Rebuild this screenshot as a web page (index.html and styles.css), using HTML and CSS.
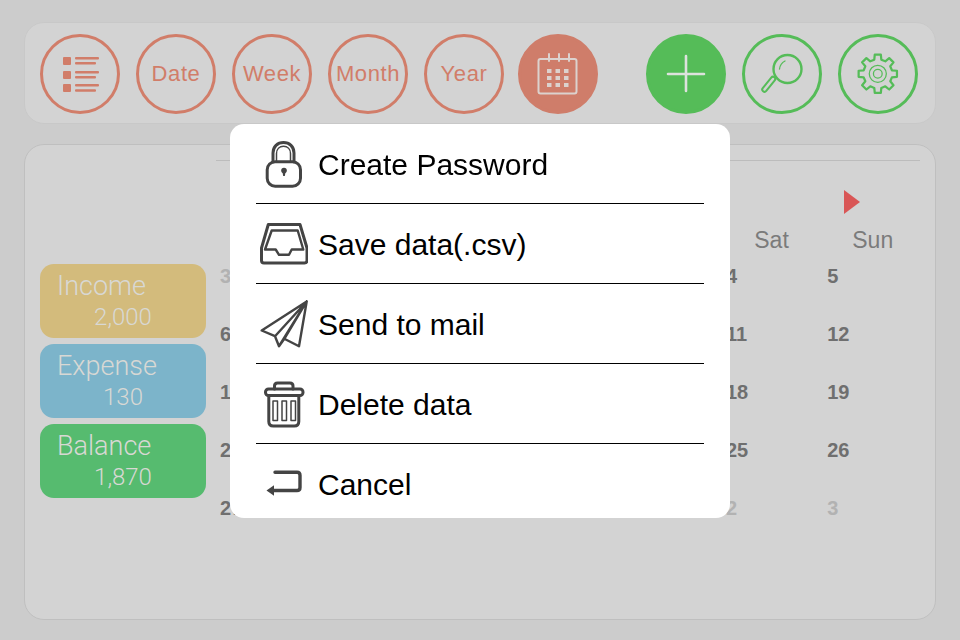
FILE: index.html
```html
<!DOCTYPE html>
<html lang="en">
<head>
<meta charset="utf-8">
<title>Household account</title>
<link rel="stylesheet" href="styles.css">
</head>
<body>
<div class="app">
  <header class="toolbar">
    <div class="btn-group">
      <button class="round red"><svg class="ico" viewBox="3 3 74 74"><g class="fill-red"><rect x="23" y="23" width="8" height="8" rx="1"/><rect x="23" y="37" width="8" height="8" rx="1"/><rect x="23" y="50" width="8" height="8" rx="1"/><rect x="35" y="23" width="24" height="2.600" rx="1"/><rect x="35" y="28" width="21" height="2.400" rx="1"/><rect x="35" y="37" width="24" height="2.400" rx="1"/><rect x="35" y="42" width="21" height="2.400" rx="1"/><rect x="35" y="50" width="24" height="2.600" rx="1"/><rect x="35" y="55.300" width="21" height="2.400" rx="1"/></g></svg></button>
      <button class="round red">Date</button>
      <button class="round red">Week</button>
      <button class="round red">Month</button>
      <button class="round red">Year</button>
      <button class="round red solid"><svg class="ico" viewBox="3 3 74 74"><g class="stroke-pale"><rect x="20.500" y="25" width="38" height="34.500" rx="2"/><path d="M31 20v7M41 20v7M51 20v7"/></g><g class="fill-pale"><rect x="29" y="35" width="4.500" height="4"/><rect x="37.500" y="35" width="4.500" height="4"/><rect x="46" y="35" width="4.500" height="4"/><rect x="29" y="42" width="4.500" height="4"/><rect x="37.500" y="42" width="4.500" height="4"/><rect x="46" y="42" width="4.500" height="4"/><rect x="29" y="49" width="4.500" height="4"/><rect x="37.500" y="49" width="4.500" height="4"/><rect x="46" y="49" width="4.500" height="4"/></g></svg></button>
    </div>
    <div class="btn-group">
      <button class="round green solid"><svg class="ico" viewBox="3 3 74 74"><path class="plus" d="M40 22v35M22 40h36"/></svg></button>
      <button class="round green"><svg class="ico" viewBox="3 3 74 74"><path class="handle-out" d="M31 45 22.500 55.500"/><path class="handle-in" d="M31 45 22.500 55.500"/><g class="stroke-green"><circle class="lens" cx="45.500" cy="35" r="14"/><path class="thin" d="M37.500 35c.5-4 2.500-6.500 5.500-8"/></g></svg></button>
      <button class="round green"><svg class="ico" viewBox="3 3 74 74"><g class="stroke-green gear" transform="translate(39.800 39.800) scale(.97)"><polygon points="-3.630,-14.550 -3.130,-19.750 3.130,-19.750 3.630,-14.550 7.730,-12.860 11.760,-16.180 16.180,-11.760 12.860,-7.730 14.550,-3.630 19.750,-3.130 19.750,3.130 14.550,3.630 12.860,7.730 16.180,11.760 11.760,16.180 7.730,12.860 3.630,14.550 3.130,19.750 -3.130,19.750 -3.630,14.550 -7.730,12.860 -11.760,16.180 -16.180,11.760 -12.860,7.730 -14.550,3.630 -19.750,3.130 -19.750,-3.130 -14.550,-3.630 -12.860,-7.730 -16.180,-11.760 -11.760,-16.180 -7.730,-12.860"/><circle class="thin" r="8.800"/><circle class="thin" r="4.500"/></g></svg></button>
    </div>
  </header>

  <main class="panel">
    <aside class="legend">
      <div class="tile income"><div class="tile-label">Income</div><div class="tile-value">2,000</div></div>
      <div class="tile expense"><div class="tile-label">Expense</div><div class="tile-value">130</div></div>
      <div class="tile balance"><div class="tile-label">Balance</div><div class="tile-value">1,870</div></div>
    </aside>
    <section class="calendar">
      <div class="cal-nav"><span class="next"></span></div>
      <div class="weekdays">
        <span></span><span></span><span></span><span></span><span></span><span>Sat</span><span>Sun</span>
      </div>
      <div class="days">
        <span class="off">30</span><span></span><span></span><span></span><span></span><span>4</span><span>5</span>
        <span>6</span><span></span><span></span><span></span><span></span><span>11</span><span>12</span>
        <span>13</span><span></span><span></span><span></span><span></span><span>18</span><span>19</span>
        <span>20</span><span></span><span></span><span></span><span></span><span>25</span><span>26</span>
        <span>27</span><span></span><span></span><span></span><span></span><span class="off">2</span><span class="off">3</span>
      </div>
    </section>
  </main>

  <nav class="menu">
    <div class="menu-row">
      <svg class="menu-ico" viewBox="0 0 48 48"><rect class="ink" x="7.200" y="21.700" width="33.300" height="24.500" rx="8"/><path class="ink" d="M13 21.700V13C13 6.500 17.500 2.500 23.500 2.500S34 6.500 34 13v8.700"/><path class="ink-thin" d="M16.500 21.700V13.500C16.500 9 19.500 6.200 23.500 6.200s7 2.800 7 7.300v8.200"/><circle class="ink-fill" cx="24" cy="30.500" r="2.800"/><path class="ink-fill" d="M22.200 31h3.600L24.800 36h-1.600z"/></svg>
      <span>Create Password</span>
    </div>
    <div class="menu-row">
      <svg class="menu-ico" viewBox="0 0 48 48"><path class="ink" d="M8.300 4.500H40L47 28v12.500q0 2.500-2.500 2.500H4q-2.500 0-2.500-2.500V28z"/><path class="ink-mid" d="M11.700 10.500h26L43.300 29.500H31.700L29 34.800H19L15.700 29.500H5z"/></svg>
      <span>Save data(.csv)</span>
    </div>
    <div class="menu-row">
      <svg class="menu-ico" viewBox="0 0 48 48"><path class="ink-mid" d="M46.700 1.500 1.700 30.500 15 36.200 19 46.200 24.300 38.800 39 46.200zM46.700 1.500 15 36.200M46.700 1.500 19 46.200M46.700 1.500 24.300 38.800"/></svg>
      <span>Send to mail</span>
    </div>
    <div class="menu-row">
      <svg class="menu-ico" viewBox="0 0 48 48"><rect class="ink" x="5.500" y="9" width="37.500" height="6.500" rx="3"/><path class="ink" d="M14.500 9V6q0-3 3-3h12.500q3 0 3 3v3M8.800 15.500V41.500q0 4.500 4.500 4.500h21q4.500 0 4.500-4.500V15.500"/><g class="ink-thin"><rect x="13" y="21" width="4.500" height="19.500"/><rect x="22" y="21" width="4.500" height="19.500"/><rect x="31" y="21" width="4.500" height="19.500"/></g></svg>
      <span>Delete data</span>
    </div>
    <div class="menu-row">
      <svg class="menu-ico" viewBox="0 0 48 48"><path class="ink-bold" d="M15 12.200H37q3 0 3 3V27.500q0 3-3 3H12"/><path class="ink-fill" d="M6.500 30.500 14 25.200V35.800z"/></svg>
      <span>Cancel</span>
    </div>
  </nav>
</div>
</body>
</html>
```
FILE: styles.css
```css
* { box-sizing: border-box; }
html, body { margin: 0; height: 100%; }
body { background: #ccc; font-family: "Liberation Sans", Arial, sans-serif; overflow: hidden; }

.app {
  position: relative;
  width: 960px;
  height: 640px;
  padding: 22px 24px 20px;
  display: flex;
  flex-direction: column;
  gap: 20px;
  will-change: opacity;
}

.toolbar {
  height: 102px;
  background: #d3d3d3;
  border: 1px solid #c8c8c8;
  border-radius: 20px;
  padding: 11px 17px 0 15px;
  display: flex;
  justify-content: space-between;
}
.btn-group { display: flex; gap: 16px; }
.btn-group:first-child .solid { margin-left: -2px; }

.round {
  flex: none;
  width: 80px;
  height: 80px;
  padding: 0;
  border-radius: 50%;
  border: 3px solid;
  background: transparent;
  font: 22px "Liberation Sans", Arial, sans-serif;
  letter-spacing: .6px;
  display: flex;
  align-items: center;
  justify-content: center;
  white-space: nowrap;
}
.round.red { color: #d17d69; border-color: #d17d69; }
.round.green { border-color: #55bc58; }
.round.red.solid { background: #cf7d6a; border-color: #cf7d6a; }
.round.green.solid { background: #55bc58; }

.ico { width: 74px; height: 74px; display: block; flex: none; }
.fill-red { fill: #d17d69; }
.fill-pale { fill: #dcd2ce; }
.stroke-pale { fill: none; stroke: #dcd2ce; stroke-width: 2; stroke-linecap: round; }
.plus { fill: none; stroke: #dde2dd; stroke-width: 2.600; stroke-linecap: round; }
.stroke-green { fill: none; stroke: #55bc58; stroke-width: 2; stroke-linejoin: round; stroke-linecap: round; }
.stroke-green .lens { stroke-width: 2.400; }
.stroke-green .thin { stroke-width: 1.300; }
.gear polygon { stroke-width: 2.300; }
.handle-out { fill: none; stroke: #55bc58; stroke-width: 6.500; stroke-linecap: round; }
.handle-in { fill: none; stroke: #d3d3d3; stroke-width: 2.500; stroke-linecap: round; }

.panel {
  flex: 1;
  background: #d3d3d3;
  border: 1px solid #bfbfbf;
  border-radius: 20px;
  display: flex;
}

.legend {
  width: 166px;
  margin: 119px 10px 0 15px;
  display: flex;
  flex-direction: column;
  gap: 6px;
}
.tile {
  height: 74px;
  border-radius: 14px;
  color: #d8d8d4;
  padding-top: 7px;
}
.income { background: #d3bb7c; }
.expense { background: #7cb4ca; }
.balance { background: #56bb6f; }
.tile-label { font: 300 27px/30px Roboto, "Liberation Sans", sans-serif; padding-left: 17px; }
.tile-value { font: 300 24px/32px Roboto, "Liberation Sans", sans-serif; text-align: center; }

.calendar { width: 704px; margin-top: 15px; border-top: 1px solid #bcbcbc; }
.cal-nav { height: 24px; margin-top: 29px; padding-left: 628px; }
.next {
  display: block;
  width: 0;
  height: 0;
  border-left: 16px solid #d95656;
  border-top: 12px solid transparent;
  border-bottom: 12px solid transparent;
}
.weekdays, .days { display: grid; grid-template-columns: repeat(7, 101.2px); }
.weekdays { margin: 12px 0 0 -1px; height: 28px; font-size: 23px; line-height: 28px; color: #7b7b7b; text-align: center; }
.days { grid-auto-rows: 58px; font-size: 20px; font-weight: 700; line-height: 22px; color: #6f6f6f; }
.days span { padding: 11px 0 0 4px; }
.days .off { color: #b2b2b2; }

.menu {
  position: absolute;
  left: 230px;
  top: 124px;
  width: 500px;
  height: 394px;
  background: #fff;
  border-radius: 14px;
  overflow: hidden;
  padding: 0 26px;
  font-size: 30px;
  color: #000;
}
.menu-row {
  height: 80px;
  border-bottom: 1px solid #000;
  display: flex;
  align-items: center;
  gap: 10px;
  padding-left: 4px;
}
.menu-row:last-child { border-bottom: 0; }
.menu-row span { position: relative; top: 1px; }
.menu-ico { width: 48px; height: 48px; flex: none; }
.ink, .ink-mid, .ink-thin, .ink-bold { fill: none; stroke: #444; stroke-linejoin: round; stroke-linecap: round; }
.ink { stroke-width: 3; }
.ink-mid { stroke-width: 2.400; }
.ink-thin { stroke-width: 1.500; }
.ink-bold { stroke-width: 3.400; }
.ink-fill { fill: #444; }
```
